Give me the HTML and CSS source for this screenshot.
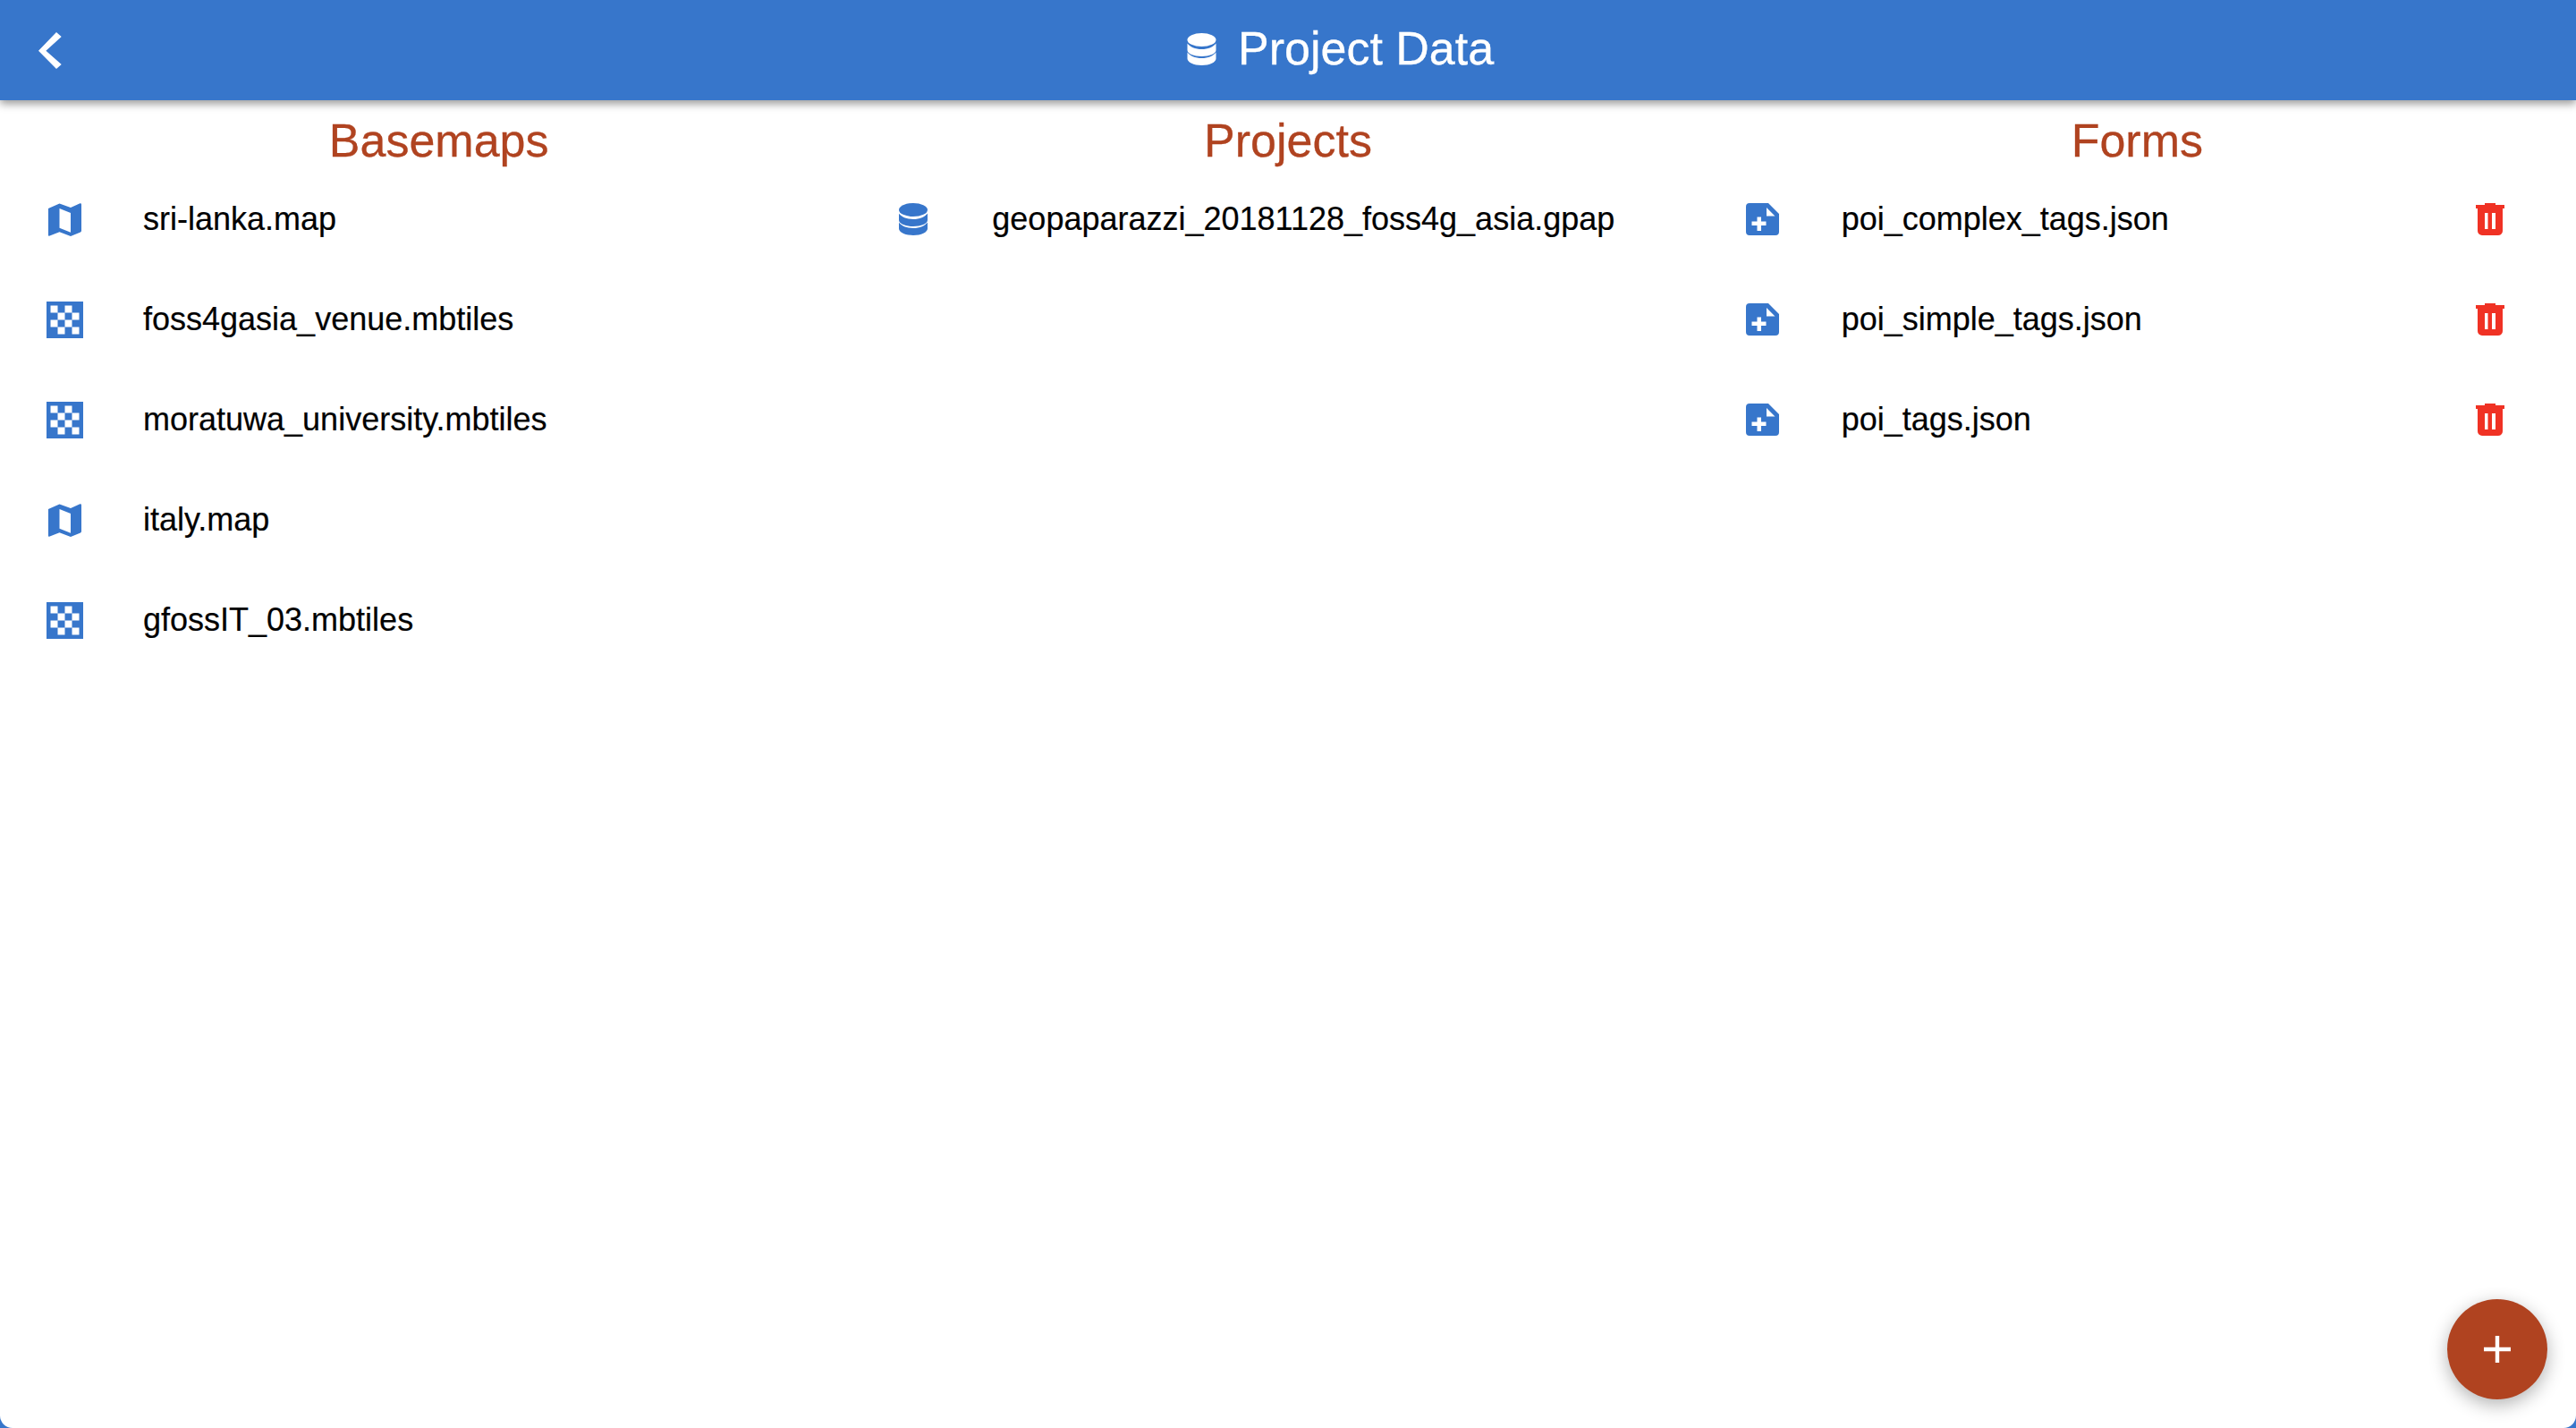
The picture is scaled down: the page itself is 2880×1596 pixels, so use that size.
FILE: index.html
```html
<!DOCTYPE html>
<html lang="en">
<head>
<meta charset="utf-8">
<title>Project Data</title>
<link rel="stylesheet" href="styles.css">
</head>
<body>
<svg class="defs" width="0" height="0" aria-hidden="true">
  <symbol id="i-db" viewBox="0 0 32 36">
    <ellipse cx="16" cy="7.5" rx="16" ry="7.5"/>
    <path d="M0 11.500v7.500c0 3.800 7 7 16 7s16-3.200 16-7v-7.500c-2.500 3.800-9 6.500-16 6.500s-13.500-2.700-16-6.500z"/>
    <path d="M0 21.500v7c0 4 7 7.500 16 7.500s16-3.500 16-7.500v-7c-2.500 3.800-9 6.500-16 6.500s-13.500-2.700-16-6.500z"/>
  </symbol>
  <symbol id="i-map" viewBox="0 0 37 37">
    <path fill-rule="evenodd" d="M0 6 L12.500 0.500 L25 5 L35.500 0.300 Q37 0 37 1.500 V31 Q37 32 36 32.400 L25 37 L12.500 32.300 L1 36.800 Q0 37 0 36 Z M12.500 6 V27.800 L25 32.700 V11 Z"/>
  </symbol>
  <symbol id="i-check" viewBox="0 0 41 41">
    <path fill-rule="evenodd" d="M0 0H41V41H0Z M4.500 4.500V12.500H12.500V4.500Z M20.500 4.500V12.500H28.500V4.500Z M12.500 12.500V20.500H20.500V12.500Z M28.500 12.500V20.500H36.500V12.500Z M4.500 20.500V28.500H12.500V20.500Z M20.500 20.500V28.500H28.500V20.500Z M12.500 28.500V36.500H20.500V28.500Z M28.500 28.500V36.500H36.500V28.500Z"/>
  </symbol>
  <symbol id="i-form" viewBox="0 0 37 36">
    <path fill-rule="evenodd" d="M4 0H25L37 12V32a4 4 0 0 1-4 4H4a4 4 0 0 1-4-4V4a4 4 0 0 1 4-4Z M23 5V14.500H32.500Z M12.500 15.500V20.500H6.500V25H12.500V31H17V25H22.500V20.500H17V15.500Z"/>
  </symbol>
  <symbol id="i-trash" viewBox="0 0 32 36">
    <path fill-rule="evenodd" d="M10 2V0H22V2H32V6H0V2Z M2 6H30V31a5 5 0 0 1-5 5H7a5 5 0 0 1-5-5Z M10 11V29H13.500V11Z M18 11V29H22V11Z"/>
  </symbol>
</svg>

<div class="screen">
  <header class="appbar">
    <button class="back" type="button" aria-label="Back">
      <svg class="back-icon" viewBox="0 0 26 41"><path d="M20 0L25.700 5 8.400 20.700 25.700 36 20 41 0 20.700Z"/></svg>
    </button>
    <h1 class="title">
      <svg class="title-icon"><use href="#i-db"/></svg>
      <span class="title-text">Project Data</span>
    </h1>
  </header>

  <main class="columns">
    <section class="col">
      <h2 class="col-title">Basemaps</h2>
      <ul class="list">
        <li class="row"><span class="lead"><svg class="ic ic-map"><use href="#i-map"/></svg></span><span class="name">sri-lanka.map</span></li>
        <li class="row"><span class="lead"><svg class="ic ic-check"><use href="#i-check"/></svg></span><span class="name">foss4gasia_venue.mbtiles</span></li>
        <li class="row"><span class="lead"><svg class="ic ic-check"><use href="#i-check"/></svg></span><span class="name">moratuwa_university.mbtiles</span></li>
        <li class="row"><span class="lead"><svg class="ic ic-map"><use href="#i-map"/></svg></span><span class="name">italy.map</span></li>
        <li class="row"><span class="lead"><svg class="ic ic-check"><use href="#i-check"/></svg></span><span class="name">gfossIT_03.mbtiles</span></li>
      </ul>
    </section>
    <section class="col">
      <h2 class="col-title">Projects</h2>
      <ul class="list">
        <li class="row"><span class="lead"><svg class="ic ic-db"><use href="#i-db"/></svg></span><span class="name">geopaparazzi_20181128_foss4g_asia.gpap</span></li>
      </ul>
    </section>
    <section class="col">
      <h2 class="col-title">Forms</h2>
      <ul class="list">
        <li class="row"><span class="lead"><svg class="ic ic-form"><use href="#i-form"/></svg></span><span class="name">poi_complex_tags.json</span><span class="trail"><svg class="ic-trash"><use href="#i-trash"/></svg></span></li>
        <li class="row"><span class="lead"><svg class="ic ic-form"><use href="#i-form"/></svg></span><span class="name">poi_simple_tags.json</span><span class="trail"><svg class="ic-trash"><use href="#i-trash"/></svg></span></li>
        <li class="row"><span class="lead"><svg class="ic ic-form"><use href="#i-form"/></svg></span><span class="name">poi_tags.json</span><span class="trail"><svg class="ic-trash"><use href="#i-trash"/></svg></span></li>
      </ul>
    </section>
  </main>

  <button class="fab" type="button" aria-label="Add">
    <svg class="fab-icon" viewBox="0 0 30 30"><path d="M12.800 0H17.200V12.800H30V17.200H17.200V30H12.800V17.200H0V12.800H12.800Z"/></svg>
  </button>
</div>
</body>
</html>
```

FILE: styles.css
```css
* { box-sizing: border-box; }

html, body {
  margin: 0;
  height: 100%;
}

body {
  background: #3776cb;
  font-family: "Liberation Sans", Arial, sans-serif;
  overflow: hidden;
}

.defs { position: absolute; }

.screen {
  position: relative;
  height: 100%;
  background: #fff;
  border-radius: 0 0 14px 14px;
  overflow: hidden;
}

.appbar {
  position: relative;
  z-index: 1;
  display: flex;
  align-items: center;
  height: 112px;
  background: #3776cb;
  box-shadow: 0 4px 9px rgba(0, 0, 0, 0.4);
}

.back {
  display: flex;
  align-items: center;
  justify-content: center;
  width: 112px;
  height: 112px;
  padding: 0;
  border: 0;
  background: none;
}

.back-icon {
  width: 26px;
  height: 41px;
  fill: #fff;
}

.title {
  display: flex;
  align-items: center;
  gap: 24px;
  margin: 0 0 0 1215px;
  padding-bottom: 2px;
  color: #fff;
  font-size: 52px;
  font-weight: 400;
  line-height: 60px;
  -webkit-text-stroke: 0.3px #fff;
}

.title-text { padding-bottom: 2px; }

.title-icon {
  width: 33px;
  height: 36px;
  fill: #fff;
}

.columns {
  display: grid;
  grid-template-columns: repeat(3, 1fr);
  padding: 0 16px;
}

.col { min-width: 0; }

.col-title {
  margin: 0;
  height: 77px;
  padding-top: 15px;
  color: #b04320;
  font-size: 52px;
  font-weight: 400;
  line-height: 60px;
  text-align: center;
  -webkit-text-stroke: 0.3px #b04320;
}

.list {
  margin: 0;
  padding: 0;
  list-style: none;
}

.row {
  display: flex;
  align-items: center;
  height: 112px;
  padding: 0 32px;
}

.lead {
  display: flex;
  align-items: center;
  justify-content: center;
  flex: 0 0 48px;
  margin-right: 64px;
}

.name {
  flex: 1;
  color: #000;
  font-size: 36px;
  line-height: 44px;
  -webkit-text-stroke: 0.2px #000;
}

.trail {
  display: flex;
  justify-content: center;
  flex: 0 0 96px;
}

.ic { fill: #3776cb; }
.ic-map { width: 37px; height: 37px; }
.ic-check { width: 41px; height: 41px; }
.ic-db { width: 32px; height: 36px; }
.ic-form { width: 37px; height: 36px; }

.ic-trash {
  width: 32px;
  height: 36px;
  fill: #f03224;
}

.fab {
  position: absolute;
  right: 32px;
  bottom: 32px;
  display: flex;
  align-items: center;
  justify-content: center;
  width: 112px;
  height: 112px;
  padding: 0;
  border: 0;
  border-radius: 50%;
  background: #b04320;
  box-shadow: 0 6px 20px rgba(0, 0, 0, 0.3);
}

.fab-icon {
  width: 30px;
  height: 30px;
  fill: #fff;
}
```
